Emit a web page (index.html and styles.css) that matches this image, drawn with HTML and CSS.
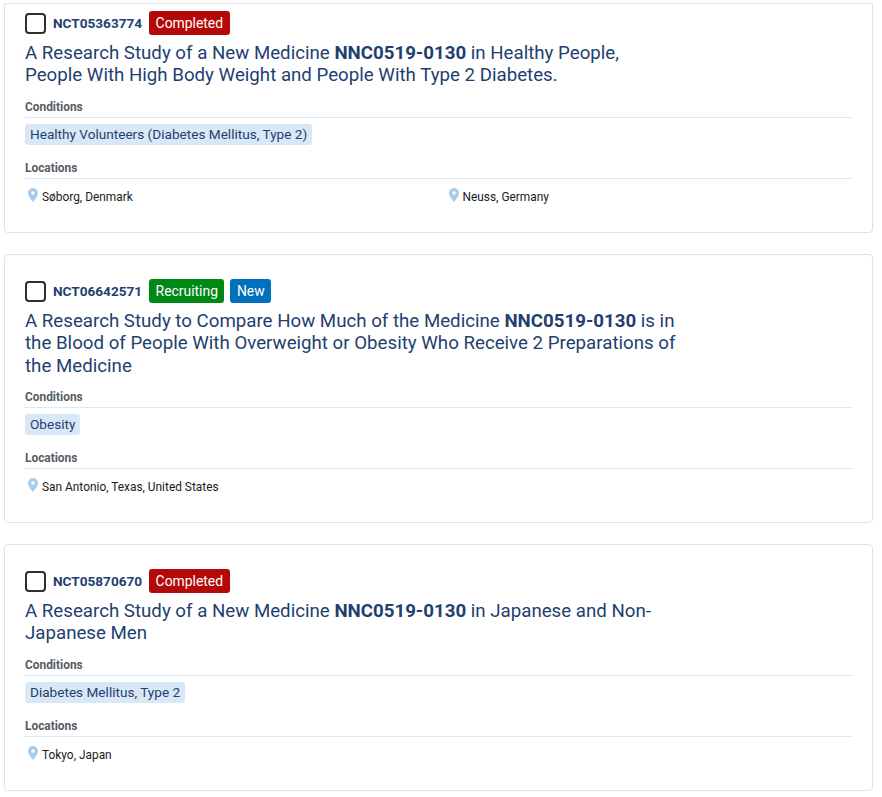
FILE: index.html
```html
<!DOCTYPE html>
<html lang="en">
<head>
<meta charset="utf-8">
<title>Study results</title>
<link rel="stylesheet" href="styles.css">
</head>
<body>
<main class="list">
  <article class="card card-first">
    <div class="head">
      <span class="check"></span>
      <span class="nct">NCT05363774</span>
      <span class="badge red">Completed</span>
    </div>
    <h2 class="title">A Research Study of a New Medicine <b>NNC0519-0130</b> in Healthy People, People With High Body Weight and People With Type 2 Diabetes.</h2>
    <div class="label">Conditions</div>
    <div class="chips"><span class="chip">Healthy Volunteers (Diabetes Mellitus, Type 2)</span></div>
    <div class="label">Locations</div>
    <div class="locs">
      <div class="loc"><svg class="pin" viewBox="0 0 10 14"><path fill-rule="evenodd" d="M5 0a5 5 0 0 1 5 5c0 3-3 6.500-5 9-2-2.500-5-6-5-9a5 5 0 0 1 5-5zm0 3.300a1.700 1.700 0 1 0 0 3.400 1.700 1.700 0 0 0 0-3.400z"/></svg>Søborg, Denmark</div>
      <div class="loc"><svg class="pin" viewBox="0 0 10 14"><path fill-rule="evenodd" d="M5 0a5 5 0 0 1 5 5c0 3-3 6.500-5 9-2-2.500-5-6-5-9a5 5 0 0 1 5-5zm0 3.300a1.700 1.700 0 1 0 0 3.400 1.700 1.700 0 0 0 0-3.400z"/></svg>Neuss, Germany</div>
    </div>
  </article>
  <article class="card">
    <div class="head">
      <span class="check"></span>
      <span class="nct">NCT06642571</span>
      <span class="badge green">Recruiting</span>
      <span class="badge blue">New</span>
    </div>
    <h2 class="title">A Research Study to Compare How Much of the Medicine <b>NNC0519-0130</b> is in the Blood of People With Overweight or Obesity Who Receive 2 Preparations of the Medicine</h2>
    <div class="label">Conditions</div>
    <div class="chips"><span class="chip">Obesity</span></div>
    <div class="label">Locations</div>
    <div class="locs">
      <div class="loc"><svg class="pin" viewBox="0 0 10 14"><path fill-rule="evenodd" d="M5 0a5 5 0 0 1 5 5c0 3-3 6.500-5 9-2-2.500-5-6-5-9a5 5 0 0 1 5-5zm0 3.300a1.700 1.700 0 1 0 0 3.400 1.700 1.700 0 0 0 0-3.400z"/></svg>San Antonio, Texas, United States</div>
    </div>
  </article>
  <article class="card">
    <div class="head">
      <span class="check"></span>
      <span class="nct">NCT05870670</span>
      <span class="badge red">Completed</span>
    </div>
    <h2 class="title">A Research Study of a New Medicine <b>NNC0519-0130</b> in Japanese and Non-Japanese Men</h2>
    <div class="label">Conditions</div>
    <div class="chips"><span class="chip">Diabetes Mellitus, Type 2</span></div>
    <div class="label">Locations</div>
    <div class="locs">
      <div class="loc"><svg class="pin" viewBox="0 0 10 14"><path fill-rule="evenodd" d="M5 0a5 5 0 0 1 5 5c0 3-3 6.500-5 9-2-2.500-5-6-5-9a5 5 0 0 1 5-5zm0 3.300a1.700 1.700 0 1 0 0 3.400 1.700 1.700 0 0 0 0-3.400z"/></svg>Tokyo, Japan</div>
    </div>
  </article>
</main>
</body>
</html>
```

FILE: styles.css
```css
* { box-sizing: border-box; }
html, body { margin: 0; padding: 0; background: #fff; }
body { font-family: Roboto, "Liberation Sans", sans-serif; color: #1b1b1b; height: 797px; overflow: hidden; }
.list { display: flex; flex-direction: column; gap: 20.600px; padding: 3px 9px 0 4px; }
.card { border: 1px solid #dfe1e2; border-radius: 4px; padding: 24.500px 20px 26px 20px; background: #fff; }
.card-first { padding-top: 7px; margin-bottom: 0.400px; border-top-left-radius: 0; border-top-right-radius: 0; }
.head { display: flex; align-items: center; height: 24px; }
.check { width: 21px; height: 21px; border: 2px solid #2e2e2e; border-radius: 4px; margin-right: 7px; margin-top: 1px; }
.nct { font-size: 13.600px; font-weight: 700; color: #1f3f70; margin-right: 7px; }
.badge { font-size: 13.900px; line-height: 24px; height: 24px; color: #fff; padding: 0 6.500px; border-radius: 3px; margin-right: 6px; }
.red { background: #b50909; }
.green { background: #008817; }
.blue { background: #0071bb; }
.title { font-size: 18.700px; font-weight: 400; line-height: 22.500px; color: #1f3f70; margin: 6.600px 0 0; width: 652px; }
.title b { font-weight: 700; }
.label { font-size: 11.900px; font-weight: 700; line-height: 15px; color: #565c65; padding-bottom: 2px; border-bottom: 1px solid #dce8f5; margin-top: 11px; }
.card .title + .label { margin-top: 13px; }
.chips { display: flex; margin-top: 6px; margin-bottom: 16px; }
.chip { font-size: 13.600px; line-height: 21px; color: #1f3f70; background: #d9e8f6; border-radius: 3px; padding: 0 5px; }
.locs { display: grid; grid-template-columns: 1fr 1fr; column-gap: 14px; margin-top: 9px; }
.loc { font-size: 11.900px; line-height: 18px; display: flex; align-items: flex-start; padding-left: 3px; color: #1b1b1b; }
.pin { width: 10px; height: 14px; fill: #a9cbec; margin-right: 4px; flex: none; }
```
